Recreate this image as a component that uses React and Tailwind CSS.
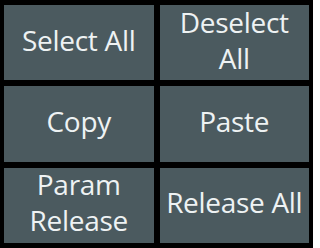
const buttons = [
  ["Select All"],
  ["Deselect", "All"],
  ["Copy"],
  ["Paste"],
  ["Param", "Release"],
  ["Release All"],
];

export default function App() {
  return (
    <div className="w-[313px] h-[248px] bg-black px-[4px] py-[5px] grid grid-cols-2 grid-rows-3 gap-[6px] font-['Open_Sans',sans-serif]">
      {buttons.map((lines, i) => (
        <button
          key={i}
          className="flex flex-col items-center justify-center pb-[6px] bg-[#4b5a5f] text-[#eef2f3] text-[28px] leading-[36px] tracking-[-0.3px]"
        >
          {lines.map((l) => (
            <span key={l}>{l}</span>
          ))}
        </button>
      ))}
    </div>
  );
}
